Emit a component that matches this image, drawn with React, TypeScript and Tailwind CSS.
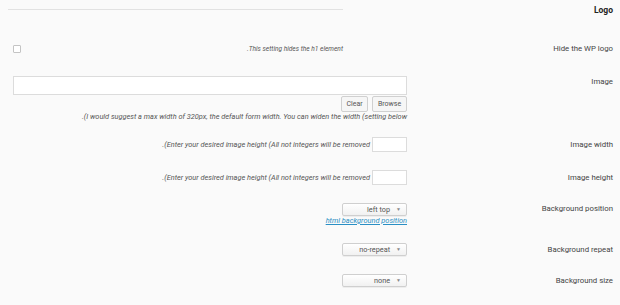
const font = { fontFamily: "Roboto, 'Liberation Sans', sans-serif" };

function Label({ children }: { children: React.ReactNode }) {
  return (
    <div className="w-[213px] shrink-0 pr-[7px] text-right text-[7.8px] leading-[10px] text-[#444]">
      {children}
    </div>
  );
}

function Help({ children, small }: { children: string; small?: boolean }) {
  return (
    <div
      dir="ltr"
      className={
        small
          ? "block text-[6.6px] italic leading-[9px] text-[#555] whitespace-nowrap"
          : "block text-[7.35px] italic leading-[9px] text-[#555] whitespace-nowrap"
      }
    >
      {children}
    </div>
  );
}

function Select({ value }: { value: string }) {
  return (
    <div className="flex h-[13px] w-[65px] items-center gap-[6px] rounded-[2px] border border-[#cfcfcf] bg-gradient-to-b from-white to-[#f1f1f1] pr-[5px] shadow-[0_1px_0_rgba(0,0,0,0.05)]">
      <span className="text-[5px] leading-none text-[#888]">▼</span>
      <span className="text-[7.3px] leading-none text-[#555]">{value}</span>
    </div>
  );
}

export default function App() {
  return (
    <div dir="rtl" style={font} className="h-[305px] w-[620px] overflow-hidden bg-[#fafafa] leading-[10px]">
      {/* header */}
      <div className="flex h-[20px] items-center">
        <div className="w-[213px] shrink-0 pr-[7px] text-right text-[8.5px] font-bold text-[#222]">Logo</div>
        <div className="ml-[8px] mt-[-2px] h-px w-[335px] mr-[64px] bg-[#e2e2e2]" />
      </div>

      {/* hide logo */}
      <div className="mt-[21px] flex h-[16px] items-center">
        <Label>Hide the WP logo</Label>
        <div className="flex w-[394px] items-center justify-between">
          <div className="mr-[64px]">
            <Help small>.This setting hides the h1 element</Help>
          </div>
          <div className="h-[8px] w-[8px] rounded-[1px] border border-[#c4c4c4] bg-white" />
        </div>
      </div>

      {/* image */}
      <div className="mt-[19px] flex items-start">
        <div className="pt-px">
          <Label>Image</Label>
        </div>
        <div className="flex w-[394px] flex-col items-start">
          <div className="h-[19px] w-[394px] border border-[#dcdcdc] bg-white" />
          <div className="mt-px flex gap-[4px]">
            <button className="h-[16px] w-[35px] rounded-[2px] border border-[#d0d0d0] bg-[#f6f6f6] text-[7px] leading-none text-[#555]">
              Browse
            </button>
            <button className="h-[16px] w-[27px] rounded-[2px] border border-[#d0d0d0] bg-[#f6f6f6] text-[7px] leading-none text-[#555]">
              Clear
            </button>
          </div>
          <Help>.(I would suggest a max width of 320px, the default form width. You can widen the width (setting below</Help>
        </div>
      </div>

      {/* image width */}
      <div className="mt-[16px] flex h-[15px] items-center">
        <Label>Image width</Label>
        <div className="flex items-center gap-[2px]">
          <div className="h-[15px] w-[35px] border border-[#dcdcdc] bg-white" />
          <Help>.(Enter your desired image height (All not integers will be removed</Help>
        </div>
      </div>

      {/* image height */}
      <div className="mt-[18px] flex h-[15px] items-center">
        <Label>Image height</Label>
        <div className="flex items-center gap-[2px]">
          <div className="h-[15px] w-[35px] border border-[#dcdcdc] bg-white" />
          <Help>.(Enter your desired image height (All not integers will be removed</Help>
        </div>
      </div>

      {/* bg position */}
      <div className="mt-[18px] flex items-start">
        <div className="pt-px">
          <Label>Background position</Label>
        </div>
        <div className="flex flex-col items-start">
          <Select value="left top" />
          <a
            href="#"
            dir="ltr"
            className="mt-px block text-[7.4px] italic leading-[8px] text-[#2a8fc4] underline"
          >
            html background position
          </a>
        </div>
      </div>

      {/* bg repeat */}
      <div className="mt-[18px] flex h-[13px] items-center">
        <Label>Background repeat</Label>
        <Select value="no-repeat" />
      </div>

      {/* bg size */}
      <div className="mt-[18px] flex h-[13px] items-center">
        <Label>Background size</Label>
        <Select value="none" />
      </div>
    </div>
  );
}
